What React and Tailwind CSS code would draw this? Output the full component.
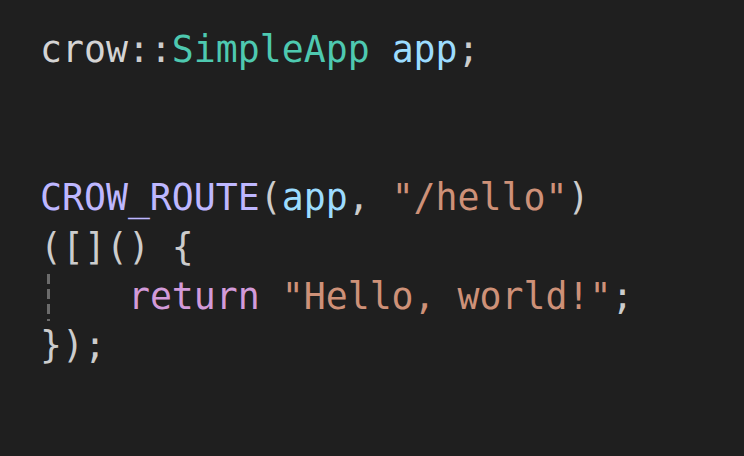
export default function App() {
  const base = "text-[#cccccc]";
  return (
    <div className="w-[744px] h-[456px] bg-[#1f1f1f] pt-[25px] pl-[40px] overflow-hidden">
      <pre className="font-['DejaVu_Sans_Mono',monospace] text-[36.5px] leading-[49.4px] text-[#cccccc] m-0">
        <div>
          <span className="text-[#d4d4d4]">crow</span>
          <span className={base}>::</span>
          <span className="text-[#4ec9b0]">SimpleApp</span>
          <span> </span>
          <span className="text-[#9cdcfe]">app</span>
          <span className={base}>;</span>
        </div>
        <div>&nbsp;</div>
        <div>&nbsp;</div>
        <div>
          <span className="text-[#beb7ff]">CROW_ROUTE</span>
          <span className={base}>(</span>
          <span className="text-[#9cdcfe]">app</span>
          <span className={base}>, </span>
          <span className="text-[#ce9178]">"/hello"</span>
          <span className={base}>)</span>
        </div>
        <div>([]() {"{"}</div>
        {/* indent guide drawn as a dashed background strip */}
        <div className="bg-[repeating-linear-gradient(to_bottom,#6b6b6b_0px,#6b6b6b_10px,transparent_10px,transparent_15px)] bg-no-repeat bg-[length:3px_100%] bg-[position:7px_2px]">
          <span>{"    "}</span>
          <span className="text-[#d29ad9]">return</span>
          <span> </span>
          <span className="text-[#ce9178]">"Hello, world!"</span>
          <span className={base}>;</span>
        </div>
        <div>{"});"}</div>
      </pre>
    </div>
  );
}
